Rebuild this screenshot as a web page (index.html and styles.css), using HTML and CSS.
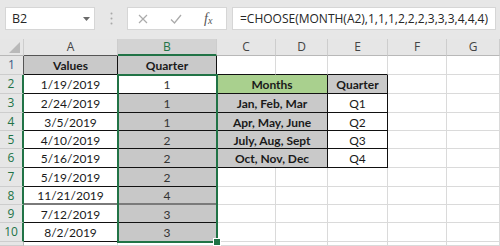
FILE: index.html
```html
<!DOCTYPE html>
<html>
<head>
<meta charset="utf-8">
<link rel="stylesheet" href="styles.css">
</head>
<body>
<div class="app">
  <div class="fbar">
    <div class="namebox"><span>B2</span><svg class="dd" width="7" height="4" viewBox="0 0 7 4"><path d="M0 0h7L3.5 4z" fill="#6a6a6a"/></svg></div>
    <div class="grip"><svg width="3" height="13" viewBox="0 0 3 13"><circle cx="1.5" cy="1.5" r="1" fill="#a8a8a8"/><circle cx="1.5" cy="6.5" r="1" fill="#a8a8a8"/><circle cx="1.5" cy="11.5" r="1" fill="#a8a8a8"/></svg></div>
    <div class="fxbox">
      <svg class="ic-x" width="10" height="10" viewBox="0 0 10 10"><path d="M1 1L9 9M9 1L1 9" stroke="#ababab" stroke-width="1.2" fill="none"/></svg>
      <svg class="ic-ok" width="12" height="10" viewBox="0 0 12 10"><path d="M1 5.5L4.5 9L11 1" stroke="#ababab" stroke-width="1.3" fill="none"/></svg>
      <span class="fx"><i>f</i><i class="sx">x</i></span>
    </div>
    <div class="formula">=CHOOSE(MONTH(A2),1,1,1,2,2,2,3,3,3,4,4,4)</div>
  </div>

  <div class="sheet">
    <!-- column headers -->
    <div class="c ch corner"><svg width="11" height="11" viewBox="0 0 11 11"><path d="M11 0V11H0z" fill="#b9b9b9"/></svg></div>
    <div class="c ch chA">A</div>
    <div class="c ch chsel">B</div>
    <div class="c ch">C</div>
    <div class="c ch">D</div>
    <div class="c ch">E</div>
    <div class="c ch">F</div>
    <div class="c ch">G</div>

    <!-- row 1 -->
    <div class="c rh rh1">1</div>
    <div class="c bx hd">Values</div>
    <div class="c bx hd">Quarter</div>
    <div class="c bb"></div>
    <div class="c bb"></div>
    <div class="c bb"></div>
    <div class="c"></div>
    <div class="c"></div>

    <!-- row 2 -->
    <div class="c rh rs">2</div>
    <div class="c bx">1/19/2019</div>
    <div class="c bx num">1</div>
    <div class="c bx green hd span2">Months</div>
    <div class="c bx hd">Quarter</div>
    <div class="c"></div>
    <div class="c"></div>

    <!-- row 3 -->
    <div class="c rh rs">3</div>
    <div class="c bx">2/24/2019</div>
    <div class="c bx num sh">1</div>
    <div class="c bx gray hd span2">Jan, Feb, Mar</div>
    <div class="c bx">Q1</div>
    <div class="c"></div>
    <div class="c"></div>

    <!-- row 4 -->
    <div class="c rh rs">4</div>
    <div class="c bx">3/5/2019</div>
    <div class="c bx num sh">1</div>
    <div class="c bx gray hd span2">Apr, May, June</div>
    <div class="c bx">Q2</div>
    <div class="c"></div>
    <div class="c"></div>

    <!-- row 5 -->
    <div class="c rh rs">5</div>
    <div class="c bx">4/10/2019</div>
    <div class="c bx num sh">2</div>
    <div class="c bx gray hd span2">July, Aug, Sept</div>
    <div class="c bx">Q3</div>
    <div class="c"></div>
    <div class="c"></div>

    <!-- row 6 -->
    <div class="c rh rs">6</div>
    <div class="c bx">5/16/2019</div>
    <div class="c bx num sh">2</div>
    <div class="c bx gray hd span2">Oct, Nov, Dec</div>
    <div class="c bx">Q4</div>
    <div class="c"></div>
    <div class="c"></div>

    <!-- row 7 -->
    <div class="c rh rs">7</div>
    <div class="c bx">5/19/2019</div>
    <div class="c bx num sh">2</div>
    <div class="c"></div>
    <div class="c"></div>
    <div class="c"></div>
    <div class="c"></div>
    <div class="c"></div>

    <!-- row 8 -->
    <div class="c rh rs">8</div>
    <div class="c bx thick">11/21/2019</div>
    <div class="c bx num sh thick">4</div>
    <div class="c"></div>
    <div class="c"></div>
    <div class="c"></div>
    <div class="c"></div>
    <div class="c"></div>

    <!-- row 9 -->
    <div class="c rh rs">9</div>
    <div class="c bx">7/12/2019</div>
    <div class="c bx num sh">3</div>
    <div class="c"></div>
    <div class="c"></div>
    <div class="c"></div>
    <div class="c"></div>
    <div class="c"></div>

    <!-- row 10 -->
    <div class="c rh rs">10</div>
    <div class="c bx">8/2/2019</div>
    <div class="c bx num sh">3</div>
    <div class="c"></div>
    <div class="c"></div>
    <div class="c"></div>
    <div class="c"></div>
    <div class="c"></div>

    <!-- row 11 (partially visible) -->
    <div class="c rh"></div>
    <div class="c"></div>
    <div class="c"></div>
    <div class="c"></div>
    <div class="c"></div>
    <div class="c"></div>
    <div class="c"></div>
    <div class="c"></div>

    <div class="selection"><span class="handle"></span></div>
  </div>
</div>
</body>
</html>
```

FILE: styles.css
```css
html, body {
  margin: 0;
  padding: 0;
}
body {
  width: 500px;
  height: 246px;
  overflow: hidden;
  background: #ffffff;
  font-family: Lato, "Open Sans", sans-serif;
}
.app {
  width: 500px;
}

/* formula bar */
.fbar {
  height: 39px;
  box-sizing: border-box;
  background: #e7e7e7;
  display: flex;
  align-items: flex-start;
  padding: 7px 0 0 5px;
}
.namebox {
  width: 90px;
  height: 23px;
  box-sizing: border-box;
  background: #fff;
  border: 1px solid #d6d6d6;
  display: flex;
  align-items: center;
  justify-content: space-between;
  padding: 0 4px 0 6px;
  font-family: "Open Sans", sans-serif;
  font-size: 12.5px;
  color: #262626;
}
.grip {
  width: 32px;
  height: 23px;
  display: flex;
  align-items: center;
  justify-content: center;
}
.fxbox {
  width: 100px;
  height: 23px;
  box-sizing: border-box;
  background: #fff;
  border: 1px solid #d6d6d6;
  display: flex;
  align-items: center;
  padding-left: 10px;
}
.ic-ok {
  margin-left: 22px;
}
.fx {
  margin-left: 22px;
  font-family: "Liberation Serif", serif;
  font-size: 14px;
  color: #555;
  display: flex;
  align-items: baseline;
}
.fx .sx {
  font-size: 10px;
  position: relative;
  top: 1px;
}
.formula {
  margin-left: 5px;
  width: 264px;
  height: 23px;
  box-sizing: border-box;
  background: #fff;
  border: 1px solid #d6d6d6;
  display: flex;
  align-items: center;
  padding-left: 7px;
  font-family: "Open Sans", sans-serif;
  font-size: 12px;
  color: #262626;
  white-space: nowrap;
  overflow: hidden;
}

/* sheet grid */
.sheet {
  position: relative;
  display: grid;
  grid-template-columns: 24px 94px 99px 59px 52px 60px 59px 53px;
  grid-template-rows: 17px 19px 19px 19px 18px 18px 19px 19px 18px 18px 19px 4px;
}
.c {
  box-sizing: border-box;
  border-right: 1px solid #dadada;
  border-bottom: 1px solid #dadada;
  display: flex;
  align-items: center;
  justify-content: center;
  padding-top: 2px;
  font-size: 12px;
  line-height: 14px;
  color: #1a1a1a;
  white-space: nowrap;
  overflow: hidden;
}
.ch {
  background: #e6e6e6;
  border-right-color: #cdcdcd;
  border-bottom-color: #b8b8b8;
  font-family: "Open Sans", sans-serif;
  font-size: 12px;
  color: #444;
  padding-top: 0;
}
.corner {
  align-items: flex-end;
  justify-content: flex-end;
  padding: 0 3px 2px 0;
}
.chA {
  border-bottom-color: #555;
}
.chsel {
  background: #d3d3d3;
  color: #217346;
  border-bottom: 2px solid #217346;
}
.rh {
  background: #e6e6e6;
  border-right-color: #b8b8b8;
  border-bottom-color: #cdcdcd;
  font-family: "Open Sans", sans-serif;
  font-size: 12px;
  color: #444;
  padding-top: 0;
}
.rh1 {
  color: #3a5a85;
  border-right-color: #555;
}
.rs {
  color: #217346;
  border-right: 2px solid #217346;
}

.bx {
  border-right-color: #111;
  border-bottom-color: #111;
}
.bb {
  border-bottom-color: #111;
}
.hd {
  font-weight: 700;
  background: #c9c9c9;
}
.green {
  background: #a9d08e;
}
.gray {
  background: #c9c9c9;
}
.span2 {
  grid-column: span 2;
}
.num {
  color: #333;
}
.sh {
  background: #c8c8c8;
}
.thick {
  border-bottom: 2px solid #7a7a7a;
}

/* selection overlay */
.selection {
  position: absolute;
  left: 117px;
  top: 35px;
  width: 101px;
  height: 169px;
  box-sizing: border-box;
  border: 2px solid #217346;
  pointer-events: none;
}
.handle {
  position: absolute;
  right: -5px;
  bottom: -5px;
  width: 6px;
  height: 6px;
  background: #217346;
  border: 1px solid #fff;
}
```
